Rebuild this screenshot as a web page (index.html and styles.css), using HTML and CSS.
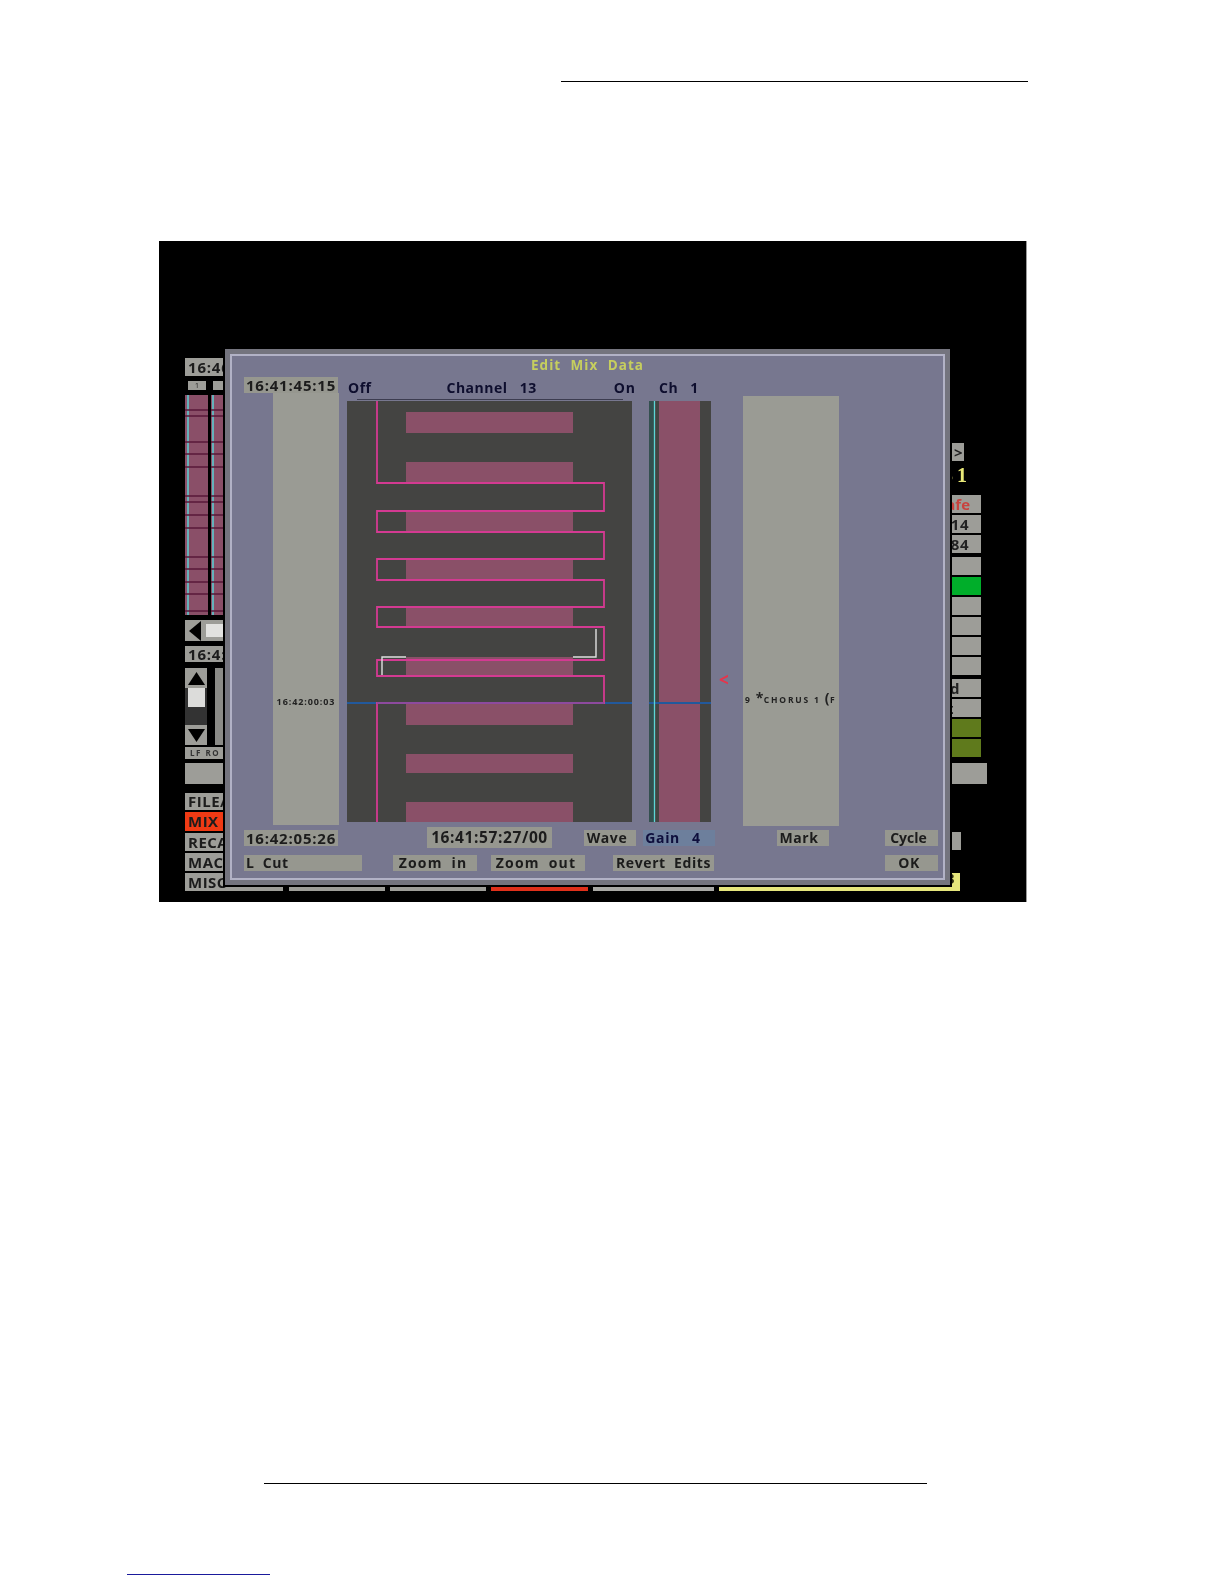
FILE: index.html
```html
<!DOCTYPE html>
<html lang="en">
<head>
    <meta charset="UTF-8">
    <title>Edit Mix Data</title>
    <link rel="stylesheet" href="styles.css">
</head>
<body>
    <div class="rule-top"></div>

    <div class="screen">
        <div class="desk">
            <div class="left-col">
                <div class="box box-clock">16:46</div>
                <div class="chan-nums">
                    <div class="chan-num">1</div>
                    <div class="chan-num"></div>
                </div>
                <svg class="strips" viewBox="184 395 66 220">
                    <g class="strip-bg">
                        <rect x="184" y="395" width="23" height="220"/>
                        <rect x="210" y="395" width="23" height="220"/>
                    </g>
                    <g class="strip-cyan">
                        <path d="M187 395V615M212 395V615"/>
                    </g>
                    <path class="strip-ticks" d="M184 410H207M184 416H207M184 442H207M184 454H207M184 467H207M184 496H207M184 502H207M184 515H207M184 528H207M184 557H207M184 569H207M184 582H207M184 594H207M184 611H207M210 410H233M210 416H233M210 442H233M210 454H233M210 467H233M210 496H233M210 502H233M210 515H233M210 528H233M210 557H233M210 569H233M210 582H233M210 594H233M210 611H233"/>
                </svg>
                <div class="box box-scroll">
                    <svg class="icon-left" viewBox="0 0 12 20"><polygon points="12,0 12,20 0,10"/></svg>
                    <div class="scroll-thumb"></div>
                </div>
                <div class="box box-clock2">16:4:</div>
                <div class="updown-row">
                    <div class="updown">
                        <div class="updown-btn">
                            <svg class="icon-arrow" viewBox="0 0 17 13"><polygon points="8.5,0 17,13 0,13"/></svg>
                        </div>
                        <div class="updown-thumb"></div>
                        <div class="updown-track"></div>
                        <div class="updown-btn">
                            <svg class="icon-arrow" viewBox="0 0 17 13"><polygon points="0,0 17,0 8.5,13"/></svg>
                        </div>
                    </div>
                    <div class="updown-side"></div>
                </div>
                <div class="box box-lfro">LF RO</div>
                <div class="box box-blank"></div>
                <div class="box menu menu-first">FILE/</div>
                <div class="box menu menu-red">MIX -</div>
                <div class="box menu">RECA</div>
                <div class="box menu">MAC</div>
            </div>

            <div class="right-col">
                <div class="rbox rbox-arrow">&gt;</div>
                <div class="right-clock">31</div>
                <div class="rbox rbox-safe">Safe</div>
                <div class="rbox">14</div>
                <div class="rbox">84</div>
                <div class="rbox rbox-gap"></div>
                <div class="rbox rbox-green"></div>
                <div class="rbox"></div>
                <div class="rbox"></div>
                <div class="rbox"></div>
                <div class="rbox"></div>
                <div class="rbox rbox-gap rbox-d">d</div>
                <div class="rbox rbox-t">t</div>
                <div class="rbox rbox-olive"></div>
                <div class="rbox rbox-olive"></div>
                <div class="rbox rbox-wide"></div>
                <div class="rbox rbox-small"></div>
            </div>
        </div>

        <div class="tray">
            <div class="box tray-misc">MISC</div>
            <div class="box tray-a">Status</div>
            <div class="box tray-b">Project</div>
            <div class="box tray-red"></div>
            <div class="box tray-c"></div>
            <div class="tray-yellow">Edit Mix Data Channel 13</div>
        </div>

        <div class="dialog">
            <div class="dlg-title">Edit Mix Data</div>

            <div class="dlg-work">
                <div class="col-times">
                    <div class="btn btn-time">16:41:45:15</div>
                    <div class="time-strip">16:42:00:03</div>
                </div>

                <div class="col-graph">
                    <div class="graph-head">
                        <span class="lbl lbl-off">Off</span>
                        <span class="lbl lbl-channel">Channel 13</span>
                        <span class="lbl lbl-on">On</span>
                    </div>
                    <svg class="graph" viewBox="347 401 285 421">
                        <g class="bars">
                            <rect x="406" y="412" width="167" height="21"/>
                            <rect x="406" y="462" width="167" height="20"/>
                            <rect x="406" y="510" width="167" height="22"/>
                            <rect x="406" y="558" width="167" height="22"/>
                            <rect x="406" y="607" width="167" height="20"/>
                            <rect x="406" y="657" width="167" height="19"/>
                            <rect x="406" y="704" width="167" height="21"/>
                            <rect x="406" y="754" width="167" height="19"/>
                            <rect x="406" y="802" width="167" height="20"/>
                        </g>
                        <path class="line-blue" d="M347 703H632"/>
                        <path class="line-edit" d="M377 401V483H604V511H377V532H604V559H377V580H604V607H377V627H604V660H377V676H604V703H377V822"/>
                        <path class="line-cross" d="M377 703H604"/>
                        <path class="line-white" d="M382 675V657H406M573 657H596V629"/>
                    </svg>
                </div>

                <div class="col-meter">
                    <div class="lbl meter-head">Ch 1</div>
                    <svg class="meter" viewBox="649 401 62 421">
                        <rect class="meter-teal" x="649" y="401" width="5" height="421"/>
                        <rect class="meter-bar" x="659" y="401" width="41" height="421"/>
                        <path class="line-blue" d="M649 703H711"/>
                        <path class="meter-cyan" d="M654.5 401V822"/>
                    </svg>
                </div>

                <div class="col-marker">&lt;</div>

                <div class="col-marks">9 <span class="mark-big">*</span>CHORUS 1 <span class="mark-big">(</span>F</div>
            </div>

            <div class="dlg-row row-one">
                <div class="btn btn-time">16:42:05:26</div>
                <div class="btn btn-now">16:41:57:27/00</div>
                <div class="btn btn-wave">Wave</div>
                <div class="btn btn-gain">Gain 4</div>
                <div class="btn btn-mark">Mark</div>
                <div class="btn btn-cycle">Cycle</div>
            </div>

            <div class="dlg-row row-two">
                <div class="btn btn-cut">L Cut</div>
                <div class="btn btn-zoomin">Zoom in</div>
                <div class="btn btn-zoomout">Zoom out</div>
                <div class="btn btn-revert">Revert Edits</div>
                <div class="btn btn-ok">OK</div>
            </div>
        </div>
    </div>

    <div class="rule-bottom"></div>
    <div class="rule-link"></div>
</body>
</html>
```

FILE: styles.css
```css
body {
    margin: 0;
    background-color: white;
    font-family: "Open Sans", Arial, sans-serif;
}

.rule-top {
    height: 1px;
    width: 467px;
    margin: 81px 0 0 561px;
    background-color: black;
}

.rule-bottom {
    height: 1px;
    width: 663px;
    margin: 581px 0 0 264px;
    background-color: black;
}

.rule-link {
    height: 1px;
    width: 143px;
    margin: 90px 0 0 127px;
    background-color: #1a1a9c;
}

.screen {
    position: relative;
    width: 867px;
    height: 661px;
    margin: 159px 0 0 159px;
    border-right: 1px solid #999;
    background-color: black;
    overflow: hidden;
    filter: blur(0.5px);
}

.desk {
    display: flex;
    height: 632px;
    padding-left: 26px;
}

/* widgets behind the dialog, left side */
.left-col {
    width: 66px;
    padding-top: 117px;
    display: flex;
    flex-direction: column;
}

.box {
    background-color: #9d9d98;
    color: #1c1c1c;
    font-weight: 700;
    white-space: nowrap;
    overflow: hidden;
}

.box-clock {
    height: 18px;
    line-height: 18px;
    font-size: 15px;
    padding-left: 3px;
    letter-spacing: 0.8px;
}

.chan-nums {
    display: flex;
    gap: 7px;
    height: 9px;
    margin-top: 5px;
    padding-left: 3px;
}

.chan-num {
    width: 18px;
    background-color: #9d9d98;
    color: #222;
    font-size: 7px;
    line-height: 9px;
    text-align: center;
}

.strips {
    display: block;
    width: 66px;
    height: 220px;
    margin-top: 5px;
}

.strip-bg rect {
    fill: #8a4f68;
}

.strip-cyan path {
    fill: none;
    stroke: #62bcc4;
    stroke-width: 1.8;
}

.strip-ticks {
    fill: none;
    stroke: #581838;
    stroke-width: 1.5;
}

.box-scroll {
    display: flex;
    align-items: center;
    height: 21px;
    margin-top: 5px;
    padding-left: 4px;
}

.icon-left {
    width: 12px;
    height: 20px;
    fill: black;
}

.scroll-thumb {
    width: 40px;
    height: 13px;
    margin-left: 5px;
    background-color: #e2e2e0;
}

.box-clock2 {
    height: 16px;
    line-height: 16px;
    font-size: 15px;
    margin-top: 5px;
    padding-left: 3px;
    letter-spacing: 0.8px;
}

.updown-row {
    display: flex;
    gap: 8px;
    height: 77px;
    margin-top: 6px;
}

.updown {
    width: 22px;
    display: flex;
    flex-direction: column;
    background-color: #333;
}

.updown-btn {
    height: 20px;
    background-color: #9d9d98;
    display: flex;
    align-items: center;
    justify-content: center;
}

.icon-arrow {
    width: 17px;
    height: 13px;
    fill: black;
}

.updown-thumb {
    width: 17px;
    height: 19px;
    margin-left: 3px;
    background-color: #dcdcda;
}

.updown-track {
    height: 18px;
}

.updown-side {
    width: 36px;
    background-color: #8b8b87;
}

.box-lfro {
    height: 12px;
    line-height: 12px;
    margin-top: 2px;
    padding-left: 5px;
    font-size: 8px;
    letter-spacing: 1.5px;
    color: #333;
}

.box-blank {
    height: 21px;
    margin-top: 4px;
}

.menu {
    height: 18px;
    line-height: 18px;
    margin-top: 2px;
    padding-left: 3px;
    font-size: 15px;
    letter-spacing: 0.5px;
}

.menu-first {
    height: 17px;
    line-height: 17px;
    margin-top: 9px;
}

.menu-red {
    height: 19px;
    line-height: 19px;
    background-color: #f03a14;
}

/* widgets behind the dialog, right side */
.right-col {
    width: 61px;
    margin-left: 679px;
    padding-top: 202px;
    display: flex;
    flex-direction: column;
    font-weight: 700;
    font-size: 15px;
}

.rbox {
    width: 51px;
    height: 18px;
    line-height: 18px;
    margin-top: 2px;
    box-sizing: border-box;
    padding-right: 12px;
    text-align: right;
    background-color: #9d9d98;
    color: #222;
    letter-spacing: 0.5px;
}

.rbox-arrow {
    width: 34px;
    margin-top: 0;
    padding-right: 1px;
}

.right-clock {
    height: 18px;
    line-height: 18px;
    width: 41px;
    margin-top: 5px;
    margin-bottom: 11px;
    text-align: right;
    color: #e8e878;
    font-family: "Liberation Serif", serif;
    font-size: 20px;
    letter-spacing: 4px;
}

.rbox-safe {
    margin-top: 0;
    padding-right: 11px;
    color: #c8423e;
    letter-spacing: 0;
}

.rbox-gap {
    margin-top: 4px;
}

.rbox-d {
    padding-right: 21px;
}

.rbox-t {
    padding-right: 27px;
}

.rbox-green {
    background-color: #00ae2a;
}

.rbox-olive {
    background-color: #5f7a1c;
}

.rbox-wide {
    width: 57px;
    height: 21px;
    margin-top: 6px;
}

.rbox-small {
    width: 31px;
    margin-top: 48px;
}

/* bottom row, mostly hidden */
.tray {
    display: flex;
    height: 18px;
    padding-left: 26px;
}

.tray-misc {
    width: 95px;
    padding-left: 3px;
    font-size: 15px;
    line-height: 18px;
    letter-spacing: 0.5px;
}

.tray-a,
.tray-b {
    width: 96px;
    padding-left: 8px;
    box-sizing: border-box;
    font-size: 13px;
    line-height: 10px;
}

.tray-a {
    margin-left: 6px;
}

.tray-b {
    margin-left: 5px;
}

.tray-red {
    width: 97px;
    margin-left: 5px;
    background-color: #e0301a;
}

.tray-c {
    width: 121px;
    margin-left: 5px;
    background-color: #a8a8a4;
}

.tray-yellow {
    width: 241px;
    margin-left: 5px;
    box-sizing: border-box;
    padding-left: 4px;
    background-color: #e6e67c;
    color: #2c2c10;
    font-size: 14px;
    font-weight: 700;
    line-height: 11px;
    letter-spacing: 2.5px;
    white-space: nowrap;
    overflow: hidden;
}

/* the dialog */
.dialog {
    position: absolute;
    left: 66px;
    top: 108px;
    width: 725px;
    height: 536px;
    box-sizing: border-box;
    border: 5px solid #74747e;
    outline: 2px solid black;
    box-shadow: inset 0 0 0 2px #b2b2c6;
    background-color: #77778f;
    color: #0e0e2e;
}

.dlg-title {
    height: 23px;
    line-height: 23px;
    text-align: center;
    color: #c6ce5e;
    font-size: 13.5px;
    font-weight: 700;
    letter-spacing: 1px;
    word-spacing: 5px;
}

.dlg-work {
    display: flex;
    height: 449px;
    padding-left: 14px;
}

.col-times {
    width: 95px;
}

.btn {
    height: 16px;
    line-height: 16px;
    box-sizing: border-box;
    background-color: #96978f;
    color: #1c1c1c;
    font-size: 14px;
    font-weight: 700;
    text-align: center;
    white-space: nowrap;
    letter-spacing: 0.6px;
    word-spacing: 4px;
}

.btn-time {
    width: 94px;
    font-size: 15px;
    letter-spacing: 0.8px;
}

.time-strip {
    width: 66px;
    height: 432px;
    box-sizing: border-box;
    margin-left: 29px;
    padding-top: 303px;
    background-color: #9a9b94;
    color: #222;
    font-size: 9px;
    font-weight: 700;
    line-height: 12px;
    text-align: center;
    letter-spacing: 0.9px;
    white-space: nowrap;
}

.col-graph {
    width: 285px;
    margin-left: 8px;
}

.graph-head {
    display: flex;
    height: 22px;
    margin: 0 9px 1px 10px;
    border-bottom: 1px solid #3c3c50;
}

.lbl {
    font-size: 14px;
    font-weight: 700;
    line-height: 22px;
    letter-spacing: 0.5px;
    word-spacing: 4px;
    white-space: nowrap;
}

.lbl-off {
    margin-left: -9px;
}

.lbl-channel {
    margin-left: 75px;
    word-spacing: 8px;
}

.lbl-on {
    margin-left: auto;
    margin-right: -13px;
    letter-spacing: 1px;
}

.graph {
    display: block;
    width: 285px;
    height: 421px;
    background-color: #444442;
}

.bars rect {
    fill: #8a5068;
}

.line-blue {
    fill: none;
    stroke: #22599c;
    stroke-width: 2;
}

.line-edit {
    fill: none;
    stroke: #d43a92;
    stroke-width: 1.8;
}

.line-cross {
    fill: none;
    stroke: #8d4a9e;
    stroke-width: 2;
}

.line-white {
    fill: none;
    stroke: #e0e0e0;
    stroke-width: 1.4;
}

.col-meter {
    width: 62px;
    margin-left: 17px;
}

.meter-head {
    height: 24px;
    margin-left: 10px;
    word-spacing: 8px;
}

.meter {
    display: block;
    width: 62px;
    height: 421px;
    background-color: #444442;
}

.meter-teal {
    fill: #33504f;
}

.meter-bar {
    fill: #8a5068;
}

.meter-cyan {
    fill: none;
    stroke: #5cd6d6;
    stroke-width: 1.3;
}

.col-marker {
    width: 24px;
    padding: 293px 0 0 8px;
    color: #e8344a;
    font-size: 17px;
    font-weight: 700;
    line-height: 20px;
}

.col-marks {
    width: 96px;
    height: 430px;
    box-sizing: border-box;
    margin-top: 19px;
    padding: 298px 0 0 2px;
    background-color: #9a9b94;
    color: #222;
    font-size: 8.5px;
    font-weight: 700;
    line-height: 12px;
    letter-spacing: 1.8px;
    white-space: nowrap;
    overflow: hidden;
}

.mark-big {
    font-size: 14px;
    line-height: 0;
    letter-spacing: 0.5px;
}

.dlg-row {
    display: flex;
    align-items: center;
    padding-left: 14px;
}

.row-one {
    height: 21px;
    margin-top: 1px;
}

.row-two {
    margin-top: 7px;
}

.btn-now {
    width: 125px;
    height: 21px;
    line-height: 21px;
    margin-left: 89px;
    font-size: 15.5px;
    letter-spacing: 0.6px;
}

.btn-wave {
    width: 52px;
    margin-left: 32px;
    padding-right: 6px;
}

.btn-gain {
    width: 72px;
    margin-left: 7px;
    padding-right: 12px;
    background-color: #6d7f9c;
    color: #0e0e3c;
    word-spacing: 8px;
}

.btn-mark {
    width: 52px;
    margin-left: 62px;
    padding-right: 8px;
}

.btn-cycle {
    width: 53px;
    margin-left: 56px;
    padding-right: 6px;
    letter-spacing: 0;
}

.btn-cut {
    width: 118px;
    padding-left: 2px;
    text-align: left;
}

.btn-zoomin {
    width: 84px;
    margin-left: 31px;
    padding-right: 4px;
    letter-spacing: 1.2px;
}

.btn-zoomout {
    width: 94px;
    margin-left: 14px;
    padding-right: 4px;
    letter-spacing: 1.2px;
}

.btn-revert {
    width: 101px;
    margin-left: 28px;
}

.btn-ok {
    width: 53px;
    margin-left: 171px;
    padding-right: 5px;
}
```
